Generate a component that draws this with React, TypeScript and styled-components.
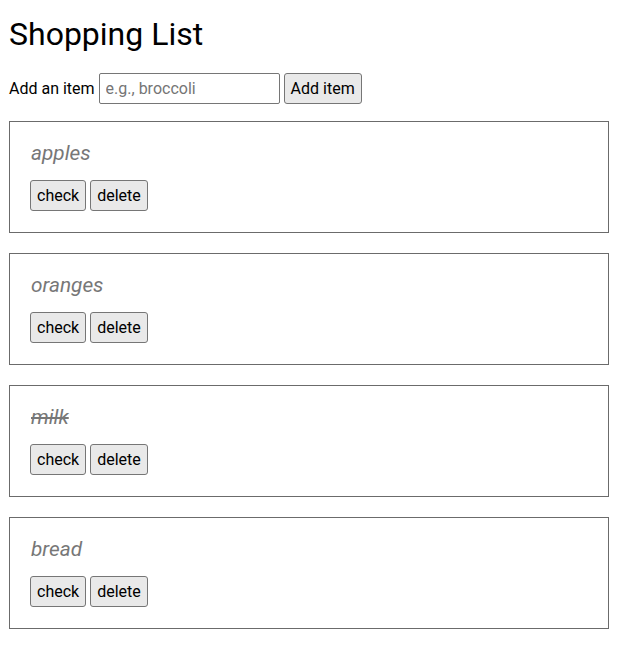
import React, { useState } from 'react';
import styled, { createGlobalStyle } from 'styled-components';

const GlobalStyle = createGlobalStyle`
  body {
    margin: 8px;
    font-family: Roboto, "Liberation Sans", Arial, sans-serif;
    color: #000;
    background: #fff;
  }
`;

const Page = styled.div`
  display: flex;
  flex-direction: column;
  padding-left: 1px;
`;

const Title = styled.h1`
  font-size: 32px;
  font-weight: 400;
  margin: 7px 0 20px;
  line-height: 1.2;
`;

const AddForm = styled.form`
  display: flex;
  align-items: center;
  gap: 4px;
  margin-bottom: 17px;
  font-size: 16px;
`;

const Label = styled.label`
  font-size: 16px;
`;

const TextInput = styled.input`
  width: 181px;
  height: 31px;
  box-sizing: border-box;
  padding: 2px 6px;
  font-family: Roboto, "Liberation Sans", Arial, sans-serif;
  font-size: 16px;
  border: 1px solid #767676;
  border-radius: 2px;

  &::placeholder {
    color: #757575;
  }
`;

const Button = styled.button`
  height: 31px;
  box-sizing: border-box;
  padding: 1px 6px;
  font-family: Roboto, "Liberation Sans", Arial, sans-serif;
  font-size: 16px;
  color: #000;
  background: #e9e9e9;
  border: 1px solid #767676;
  border-radius: 3px;
`;

const List = styled.ul`
  list-style: none;
  margin: 0;
  padding: 0;
  width: 600px;
  display: flex;
  flex-direction: column;
  gap: 20px;
`;

const Card = styled.li`
  box-sizing: border-box;
  height: 112px;
  border: 1px solid #6b6b6b;
  padding: 20px 20px;
`;

const ItemName = styled.p<{ $done: boolean }>`
  margin: 0 0 16px 1px;
  font-size: 20.8px;
  line-height: 22px;
  font-style: italic;
  color: #777;
  text-decoration: ${(p) => (p.$done ? 'line-through' : 'none')};
`;

const Actions = styled.div`
  display: flex;
  gap: 4px;
`;

type Item = { name: string; done: boolean };

export default function App() {
  const [items, setItems] = useState<Item[]>([
    { name: 'apples', done: false },
    { name: 'oranges', done: false },
    { name: 'milk', done: true },
    { name: 'bread', done: false },
  ]);
  const [text, setText] = useState('');

  const add = (e: React.FormEvent) => {
    e.preventDefault();
    if (!text.trim()) return;
    setItems([...items, { name: text.trim(), done: false }]);
    setText('');
  };

  return (
    <Page>
      <GlobalStyle />
      <Title>Shopping List</Title>
      <AddForm onSubmit={add}>
        <Label htmlFor="item">Add an item</Label>
        <TextInput
          id="item"
          placeholder="e.g., broccoli"
          value={text}
          onChange={(e) => setText(e.target.value)}
        />
        <Button type="submit">Add item</Button>
      </AddForm>
      <List>
        {items.map((item, i) => (
          <Card key={i}>
            <ItemName $done={item.done}>{item.name}</ItemName>
            <Actions>
              <Button
                onClick={() =>
                  setItems(items.map((it, j) => (j === i ? { ...it, done: !it.done } : it)))
                }
              >
                check
              </Button>
              <Button onClick={() => setItems(items.filter((_, j) => j !== i))}>delete</Button>
            </Actions>
          </Card>
        ))}
      </List>
    </Page>
  );
}
